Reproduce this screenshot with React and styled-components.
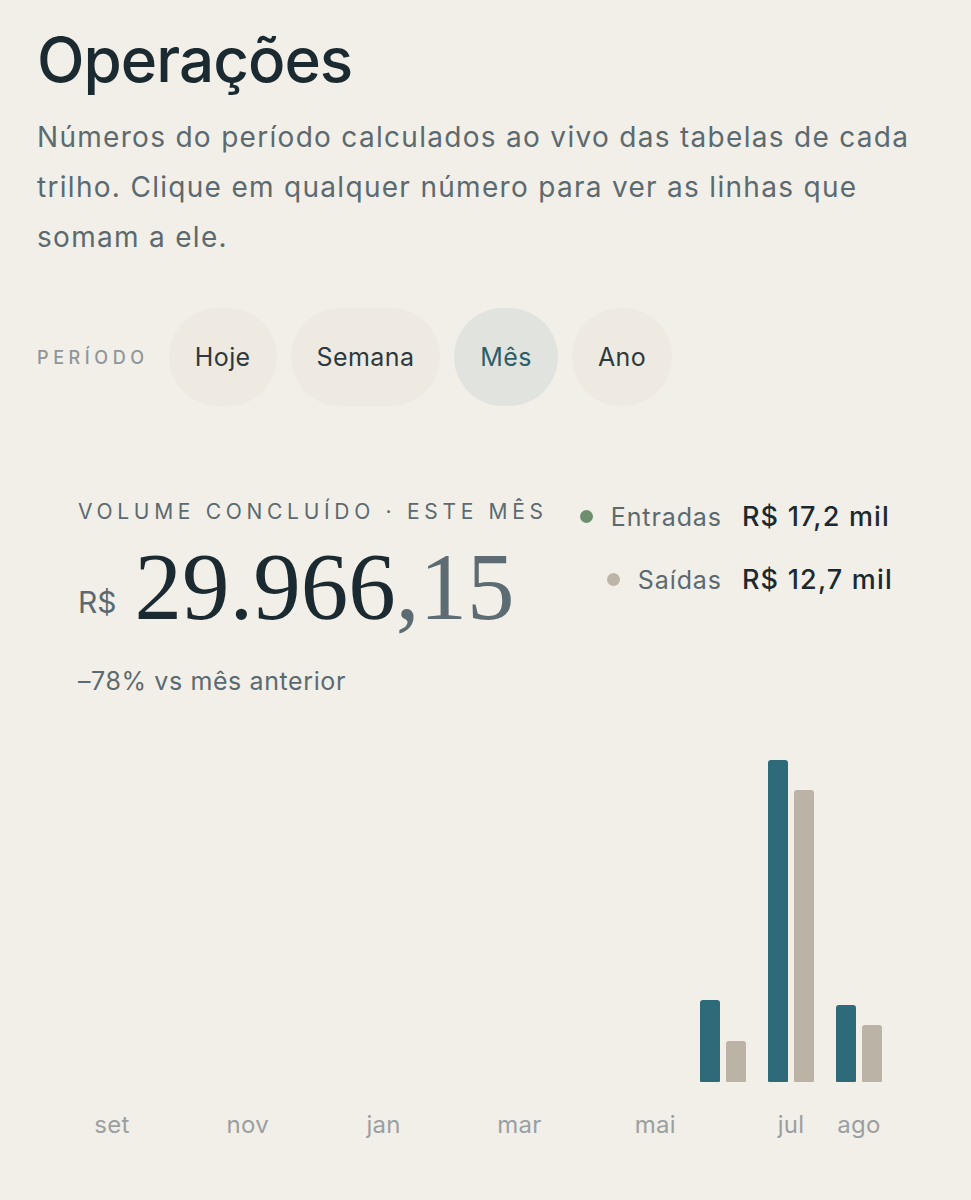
import React from 'react';
import styled, { createGlobalStyle } from 'styled-components';

const GlobalStyle = createGlobalStyle`
    html, body {
        margin: 0;
        padding: 0;
        background: #f2efe8;
    }
    body {
        font-family: "Inter", "Open Sans", sans-serif;
        color: #1b2a30;
    }
`;

const periods = ['Hoje', 'Semana', 'Mês', 'Ano'];

const months = [
    { label: 'set', inn: 0, out: 0 },
    { label: '', inn: 0, out: 0 },
    { label: 'nov', inn: 0, out: 0 },
    { label: '', inn: 0, out: 0 },
    { label: 'jan', inn: 0, out: 0 },
    { label: '', inn: 0, out: 0 },
    { label: 'mar', inn: 0, out: 0 },
    { label: '', inn: 0, out: 0 },
    { label: 'mai', inn: 0, out: 0 },
    { label: '', inn: 18.3, out: 9.2 },
    { label: 'jul', inn: 71.9, out: 65.2 },
    { label: 'ago', inn: 17.2, out: 12.7 }
];

const PX_PER_K = 4.48;

const App = () => {
    const active = 'Mês';

    return (
        <Page>
            <GlobalStyle />
            <Title>Operações</Title>
            <Lead>
                Números do período calculados ao vivo das tabelas de cada
                trilho. Clique em qualquer número para ver as linhas que
                somam a ele.
            </Lead>

            <PeriodRow>
                <PeriodLabel>Período</PeriodLabel>
                {periods.map((p) => (
                    <Pill key={p} active={p === active}>{p}</Pill>
                ))}
            </PeriodRow>

            <Panel>
                <StatsRow>
                    <div>
                        <Kicker>Volume concluído · este mês</Kicker>
                        <Amount>
                            <Currency>R$</Currency>
                            <Whole>29.966</Whole>
                            <Cents>,15</Cents>
                        </Amount>
                        <Delta>–78% vs mês anterior</Delta>
                    </div>
                    <Legend>
                        <LegendLabel>
                            <Dot color="#6e8f6e" />
                            Entradas
                        </LegendLabel>
                        <LegendValue>R$ 17,2 mil</LegendValue>
                        <LegendLabel>
                            <Dot color="#bdb4a6" />
                            Saídas
                        </LegendLabel>
                        <LegendValue>R$ 12,7 mil</LegendValue>
                    </Legend>
                </StatsRow>

                <Chart>
                    {months.map((m, i) => (
                        <Column key={i}>
                            <Bars>
                                {m.inn > 0 && (
                                    <Bar tone="in" style={{ height: m.inn * PX_PER_K }} />
                                )}
                                {m.out > 0 && (
                                    <Bar tone="out" style={{ height: m.out * PX_PER_K }} />
                                )}
                            </Bars>
                            <MonthLabel>{m.label || '\u00a0'}</MonthLabel>
                        </Column>
                    ))}
                </Chart>
            </Panel>
        </Page>
    );
};

export default App;

const Page = styled.div`
    padding: 22px 37px 40px;
`;

const Title = styled.h1`
    margin: 0;
    font-size: 62px;
    font-weight: 500;
    line-height: 76px;
    letter-spacing: -1px;
    color: #1b2a30;
`;

const Lead = styled.p`
    margin: 14px 0 0;
    font-size: 28px;
    line-height: 50px;
    letter-spacing: 1.3px;
    color: #5b6a70;
    max-width: 890px;
`;

const PeriodRow = styled.div`
    display: flex;
    align-items: center;
    gap: 14px;
    margin-top: 46px;
`;

const PeriodLabel = styled.span`
    font-size: 18px;
    font-weight: 500;
    letter-spacing: 4.6px;
    text-transform: uppercase;
    color: #8f9599;
    margin-right: 6px;
`;

const Pill = styled.button`
    border: none;
    font-family: inherit;
    font-size: 25px;
    letter-spacing: 0.4px;
    height: 98px;
    padding: 0 26px;
    border-radius: 49px;
    background: ${(p) => (p.active ? '#e1e3de' : '#eeeae2')};
    color: ${(p) => (p.active ? '#2a5f6b' : '#2c3a3f')};
    cursor: pointer;
`;

const Panel = styled.section`
    padding: 91px 41px 0;
`;

const StatsRow = styled.div`
    display: flex;
    justify-content: space-between;
    align-items: flex-start;
`;

const Kicker = styled.div`
    font-size: 21px;
    letter-spacing: 4.7px;
    text-transform: uppercase;
    color: #5b6a70;
    line-height: 30px;
`;

const Amount = styled.div`
    display: flex;
    align-items: baseline;
    margin-top: 10px;
    line-height: 100px;
`;

const Currency = styled.span`
    font-size: 30px;
    color: #5b6a70;
    margin-right: 18px;
    position: relative;
    top: -6px;
`;

const Whole = styled.span`
    font-family: "Liberation Serif", "DejaVu Serif", serif;
    font-size: 95px;
    color: #1b2a30;
`;

const Cents = styled(Whole)`
    color: #5d6c72;
`;

const Delta = styled.div`
    margin-top: 8px;
    font-size: 25px;
    letter-spacing: 0.6px;
    color: #5b6a70;
`;

const Legend = styled.div`
    display: grid;
    grid-template-columns: auto auto;
    column-gap: 20px;
    row-gap: 30px;
    align-items: center;
    margin-top: 3px;
`;

const LegendLabel = styled.div`
    display: flex;
    align-items: center;
    justify-content: flex-end;
    gap: 18px;
    font-size: 25px;
    letter-spacing: 0.9px;
    color: #5b6a70;
`;

const Dot = styled.span`
    width: 13px;
    height: 13px;
    border-radius: 50%;
    background: ${(p) => p.color};
`;

const LegendValue = styled.div`
    font-size: 27px;
    font-weight: 500;
    letter-spacing: 1.2px;
    color: #1b2a30;
`;

const Chart = styled.div`
    display: grid;
    grid-template-columns: repeat(12, 1fr);
    margin-top: 46px;
`;

const Column = styled.div`
    display: flex;
    flex-direction: column;
    align-items: center;
`;

const Bars = styled.div`
    height: 340px;
    display: flex;
    align-items: flex-end;
    gap: 6px;
`;

const Bar = styled.div`
    width: 20px;
    border-radius: 3px 3px 1px 1px;
    background: ${(p) => (p.tone === 'in' ? '#2e6b7a' : '#bbb3a5')};
`;

const MonthLabel = styled.div`
    margin-top: 28px;
    font-size: 24px;
    letter-spacing: 0.3px;
    color: #9aa0a2;
`;
